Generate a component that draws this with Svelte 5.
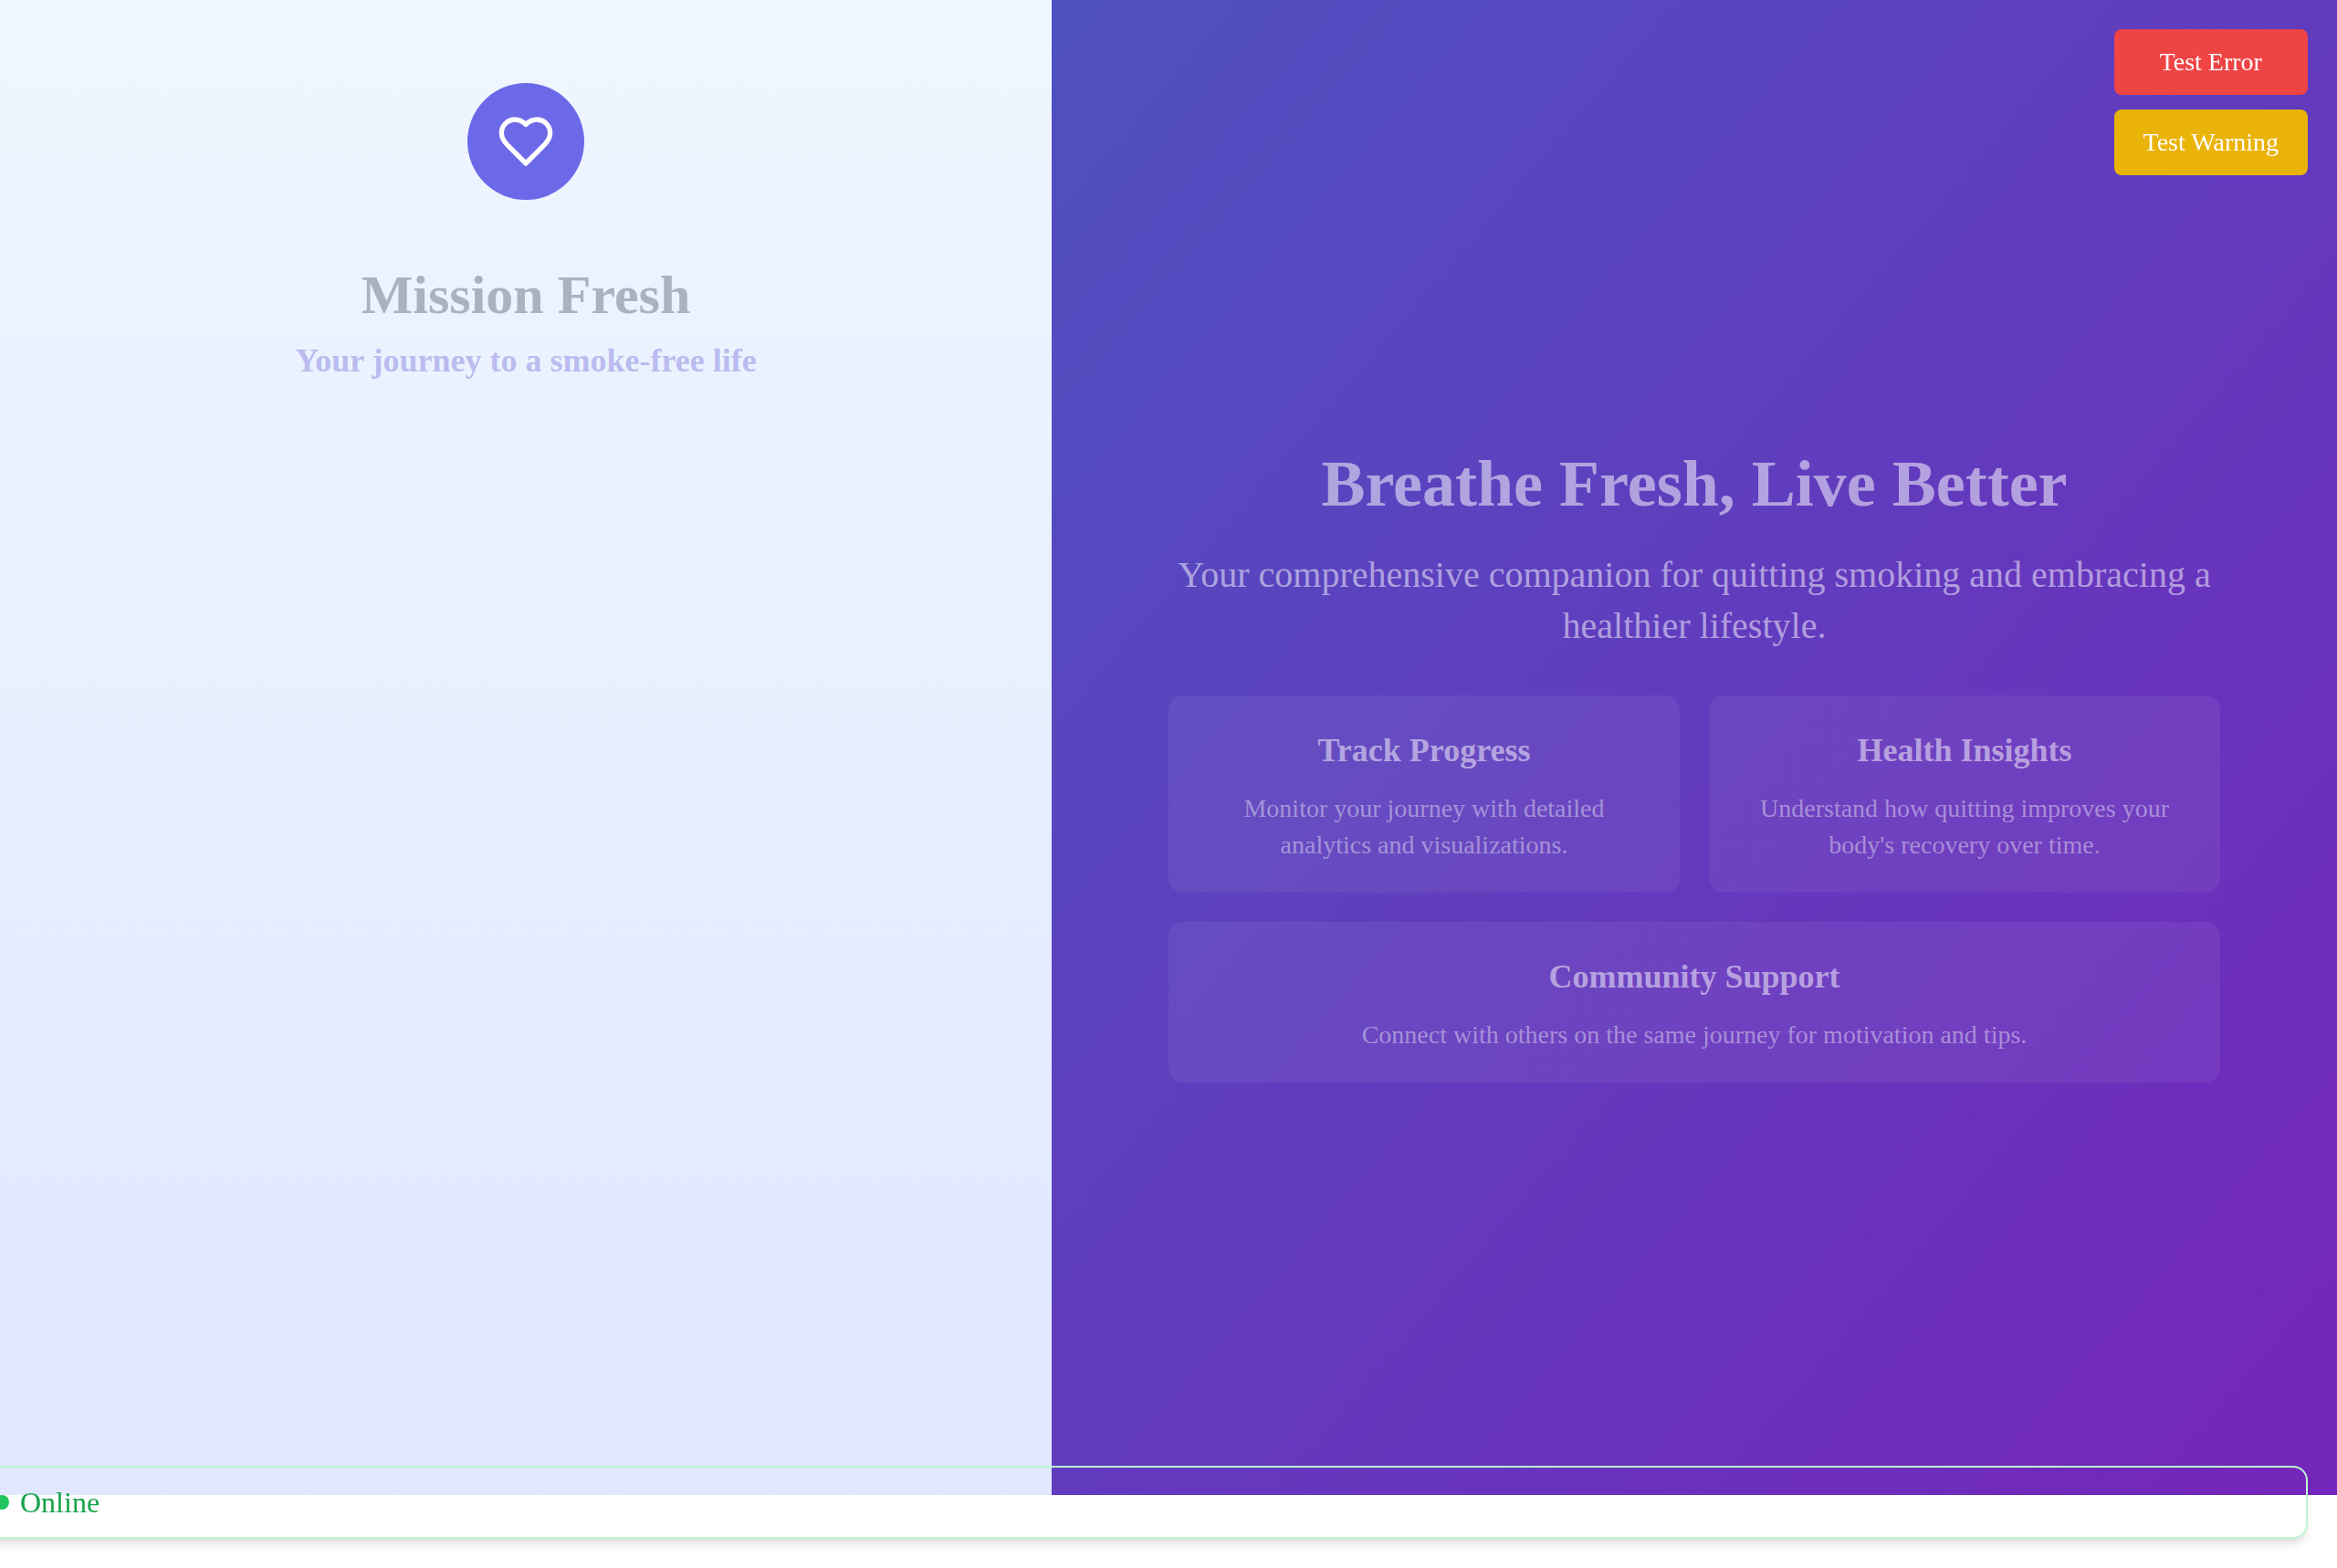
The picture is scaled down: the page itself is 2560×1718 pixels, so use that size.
<script>
  const features = [
    { title: 'Track Progress', text: 'Monitor your journey with detailed analytics and visualizations.' },
    { title: 'Health Insights', text: "Understand how quitting improves your body's recovery over time." },
    { title: 'Community Support', text: 'Connect with others on the same journey for motivation and tips.', wide: true }
  ];
</script>

<main class="page">
  <section class="brand">
    <div class="logo">
      <svg viewBox="0 0 24 24" fill="none" stroke="currentColor" stroke-width="2" stroke-linecap="round" stroke-linejoin="round" aria-hidden="true">
        <path d="M19 14c1.49-1.46 3-3.21 3-5.5A5.5 5.5 0 0 0 16.5 3c-1.76 0-3 .5-4.5 2-1.5-1.5-2.74-2-4.5-2A5.5 5.5 0 0 0 2 8.5c0 2.3 1.5 4.05 3 5.5l7 7Z" />
      </svg>
    </div>
    <h1>Mission Fresh</h1>
    <h2 class="tagline">Your journey to a smoke-free life</h2>
  </section>

  <section class="hero">
    <div class="pitch">
      <h2>Breathe Fresh, Live Better</h2>
      <p class="lead">Your comprehensive companion for quitting smoking and embracing a healthier lifestyle.</p>
      <div class="features">
        {#each features as feature}
          <article class="card" class:wide={feature.wide}>
            <h3>{feature.title}</h3>
            <p>{feature.text}</p>
          </article>
        {/each}
      </div>
    </div>
  </section>
</main>

<div class="tests">
  <button type="button" class="error">Test Error</button>
  <button type="button" class="warning">Test Warning</button>
</div>

<div class="status" role="status">
  <span class="dot"></span>
  <span>Online</span>
</div>

<style>
  :global(body) {
    margin: 0;
    background: #fff;
    font-family: 'Liberation Serif', 'Times New Roman', serif;
  }

  h1, h2, h3, p {
    margin: 0;
  }

  .page {
    display: grid;
    grid-template-columns: 45fr 55fr;
    min-height: calc(100vh - 80px);
  }

  .brand {
    display: flex;
    flex-direction: column;
    align-items: center;
    box-sizing: border-box;
    padding: 91px 64px 64px;
    text-align: center;
    background: linear-gradient(to bottom, #eff6ff, #e0e7ff);
  }

  .logo {
    display: flex;
    align-items: center;
    justify-content: center;
    width: 128px;
    height: 128px;
    margin-bottom: 68px;
    border-radius: 50%;
    color: #fff;
    background: #6c69e9;
  }

  .logo svg {
    width: 64px;
    height: 64px;
  }

  h1 {
    margin-bottom: 8px;
    font-size: 60px;
    line-height: 72px;
    color: #abb1c0;
  }

  .tagline {
    font-size: 36px;
    line-height: 56px;
    color: #bbbbf0;
  }

  .hero {
    display: flex;
    align-items: center;
    justify-content: center;
    box-sizing: border-box;
    padding: 37px 128px 0;
    text-align: center;
    color: rgba(255, 255, 255, 0.52);
    background: linear-gradient(to bottom right, #4f51c0, #7525bb);
  }

  .pitch {
    width: 100%;
    max-width: 1152px;
  }

  .pitch h2 {
    margin-bottom: 32px;
    font-size: 72px;
    line-height: 80px;
  }

  .lead {
    margin-bottom: 48px;
    font-size: 40px;
    line-height: 56px;
  }

  .features {
    display: grid;
    grid-template-columns: 1fr 1fr;
    gap: 32px;
  }

  .card {
    padding: 32px;
    border-radius: 16px;
    background: rgba(255, 255, 255, 0.06);
  }

  .wide {
    grid-column: 1 / -1;
  }

  .card h3 {
    margin-bottom: 16px;
    font-size: 36px;
    line-height: 56px;
  }

  .card p {
    font-size: 28px;
    line-height: 40px;
    color: rgba(255, 255, 255, 0.41);
  }

  .tests {
    position: fixed;
    top: 32px;
    right: 32px;
    display: flex;
    flex-direction: column;
    gap: 16px;
  }

  .tests button {
    padding: 16px 32px;
    border: 0;
    border-radius: 8px;
    font: inherit;
    font-size: 28px;
    line-height: 40px;
    color: #fff;
    cursor: pointer;
  }

  .error {
    background: #ef4444;
  }

  .warning {
    background: #eab308;
  }

  /* The status strip runs off the left edge of the window. */
  .status {
    position: fixed;
    right: 32px;
    bottom: 32px;
    left: -40px;
    display: flex;
    align-items: center;
    gap: 12px;
    box-sizing: border-box;
    height: 80px;
    padding: 0 32px;
    border: 2px solid #bbf7d0;
    border-radius: 16px;
    font-size: 32px;
    color: #16a34a;
    box-shadow: 0 8px 12px -2px rgba(0, 0, 0, 0.1), 0 4px 8px -4px rgba(0, 0, 0, 0.1);
  }

  .dot {
    width: 16px;
    height: 16px;
    border-radius: 50%;
    background: #22c55e;
  }
</style>
